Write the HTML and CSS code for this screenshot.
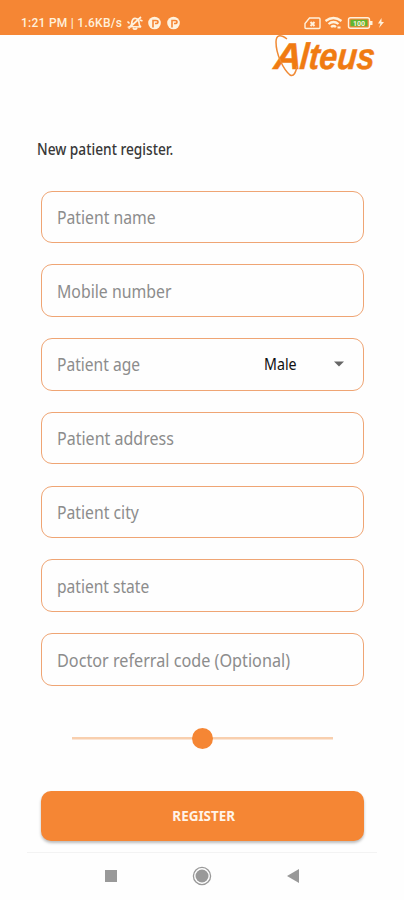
FILE: index.html
```
<!DOCTYPE html>
<html lang="en">
<head>
<meta charset="utf-8">
<title>New patient register</title>
<link rel="stylesheet" href="styles.css">
</head>
<body>
<header class="status">
  <span class="clock">1:21 PM | 1.6KB/s</span>
  <svg class="status-left" width="56" height="16" viewBox="0 0 56 16" fill="none" stroke="#fff1dc" stroke-width="1.7">
    <path d="M5 11.500c2-1 1.500-3 2-5s2-3.500 4-3 3 2 3 4 .3 3.500 2 4.500zM3.500 13.500 16 2M8 13c1 1.500 3 1.500 4 0M2.500 6.500l2 2M15 5l2.500 1"/>
    <g fill="#fff1dc" stroke="none"><circle cx="29.500" cy="8" r="6.300"/><circle cx="48.500" cy="8" r="6.300"/></g>
    <path stroke="#f58634" stroke-width="1.600" d="M28 12.500V5.500h3q2 0 2 1.500t-2 1.500h-1M47 12.500V5.500h3q2 0 2 1.500t-2 1.500h-1"/>
  </svg>
  <svg class="status-right" width="84" height="16" viewBox="0 0 84 16" fill="none" stroke="#fff1dc" stroke-width="1.400">
    <path d="M8.500 3H18q1 0 1 1v8.500q0 1-1 1H5q-1 0-1-1V8.500z"/>
    <path stroke-width="2" d="m9.500 7 4 4M13.500 7l-4 4"/>
    <path stroke-width="2.200" d="M24.500 6q8-6 16 0M27.500 9q5-4 10 0M30 12q2.500-2 5 0"/>
    <path fill="#fff1dc" d="M36.500 11.500h3v2h-3z" stroke="none"/>
    <rect x="47.500" y="2.700" width="21" height="10.600" rx="2"/>
    <rect x="49.500" y="4.700" width="17" height="6.600" fill="#60b52f" stroke="none"/>
    <path fill="#fff1dc" stroke="none" d="M69 6h2.500v4H69zM80.500 3 77 8.500h2.500L78 13l5-6h-2.500z"/>
    <text class="charge" x="52" y="10.500">100</text>
  </svg>
</header>
<main class="page">
  <svg class="logo" width="130" height="60" viewBox="0 0 130 60">
    <g transform="translate(8 48.500) skewX(-5)">
      <text class="logo-text" x="0" y="0" textLength="28" lengthAdjust="spacingAndGlyphs">A</text>
      <text class="logo-text" x="26" y="0" textLength="75" lengthAdjust="spacingAndGlyphs">lteus</text>
    </g>
    <path class="orbit" d="M22 19C15 14 11 15 11 22c0 12 7 27 14 33 4 2 6-3 7-9"/>
  </svg>
  <h1 class="title"><span>New patient register.</span></h1>
  <form class="form">
    <div class="field"><span class="hint name">Patient name</span></div>
    <div class="field"><span class="hint mobile">Mobile number</span></div>
    <div class="field"><span class="hint age">Patient age</span><span class="select">Male</span>
      <svg class="caret" width="10" height="6" viewBox="0 0 10 6"><path fill="#666" d="M0 .5h10L5 5.500z"/></svg></div>
    <div class="field"><span class="hint address">Patient address</span></div>
    <div class="field"><span class="hint city">Patient city</span></div>
    <div class="field"><span class="hint state">patient state</span></div>
    <div class="field"><span class="hint code">Doctor referral code (Optional)</span></div>
    <div class="slider"><i class="thumb"></i></div>
    <button class="register" type="button"><span>REGISTER</span></button>
  </form>
</main>
<nav class="nav">
  <svg width="12" height="12" viewBox="0 0 12 12"><rect width="12" height="12" fill="#999"/></svg>
  <svg width="20" height="20" viewBox="0 0 20 20"><circle cx="10" cy="10" r="8.600" fill="none" stroke="#999" stroke-width="1.300"/><circle cx="10" cy="10" r="6.500" fill="#999"/></svg>
  <svg width="12" height="14" viewBox="0 0 12 14"><path fill="#999" d="M12 0v14L0 7z"/></svg>
</nav>
</body>
</html>
```
FILE: styles.css
```
* { box-sizing: border-box; }
body { margin: 0; width: 404px; height: 900px; overflow: hidden; background: #fefefe; font-family: "Noto Sans", sans-serif; display: flex; flex-direction: column; }
.status { height: 35px; flex: none; background: #f58634; display: flex; align-items: flex-start; padding: 15px 19px 0 21px; }
.clock { font: 500 12px/17px Roboto, sans-serif; color: #fff1dc; width: 104px; white-space: nowrap; letter-spacing: .26px; }
.status-right { margin-left: auto; }
.charge { font: 700 7px Roboto, sans-serif; fill: #fff1dc; stroke: none; }
.page { display: flex; flex-direction: column; height: 817px; flex: none; }
.logo { margin: -15px 0 0 265px; flex: none; overflow: visible; }
.logo-text { font: italic 700 37px "Liberation Sans", sans-serif; fill: #f07b12; stroke: #f07b12; stroke-width: .5; }
.orbit { fill: none; stroke: #f08a35; stroke-width: 1.500; }
.title { margin: 57px 0 0 37px; height: 24px; font-size: 16px; line-height: 24px; font-weight: 500; color: #383838; white-space: nowrap; }
.title span, .hint, .select, .register span { display: inline-block; transform-origin: left center; white-space: nowrap; }
.title span { transform: scaleX(.857); }
.form { margin: 29.500px 40px 0 41px; display: flex; flex-direction: column; gap: 21.300px; }
.field { height: 52.500px; border: 1.500px solid #efa574; border-radius: 11px; display: flex; align-items: center; padding: 0 19px 0 15px; }
.hint { font-size: 18px; line-height: 26px; color: #8c8c8c; }
.name { transform: scaleX(.875); }
.mobile { transform: scaleX(.88); }
.age { transform: scaleX(.866); }
.address { transform: scaleX(.89); }
.city { transform: scaleX(.875); }
.state { transform: scaleX(.865); }
.code { transform: scaleX(.9); }
.select { font-size: 16px; color: #111; margin-left: auto; width: 70px; transform: scaleX(.89); }
.caret { flex: none; }
.slider { height: 22px; margin: 20.200px 31px 0; display: flex; align-items: center; justify-content: center; background: linear-gradient(#f8cfae, #f8cfae) center / 100% 2.500px no-repeat; }
.thumb { width: 21px; height: 21px; border-radius: 50%; background: #f58634; }
.register { margin-top: 20px; height: 50px; border: 0; border-radius: 10px; background: #f58634; box-shadow: 0 2px 3px #0004; color: #fff3e8; font: 700 14px "Noto Sans", sans-serif; }
.register span { transform: translateX(1px) scaleX(.96); transform-origin: center; }
.nav { width: 350px; height: 48px; margin-left: 27px; border-top: 1px solid #f3f3f3; display: flex; align-items: center; justify-content: space-between; padding: 0 78px 1px 78px; }
```
